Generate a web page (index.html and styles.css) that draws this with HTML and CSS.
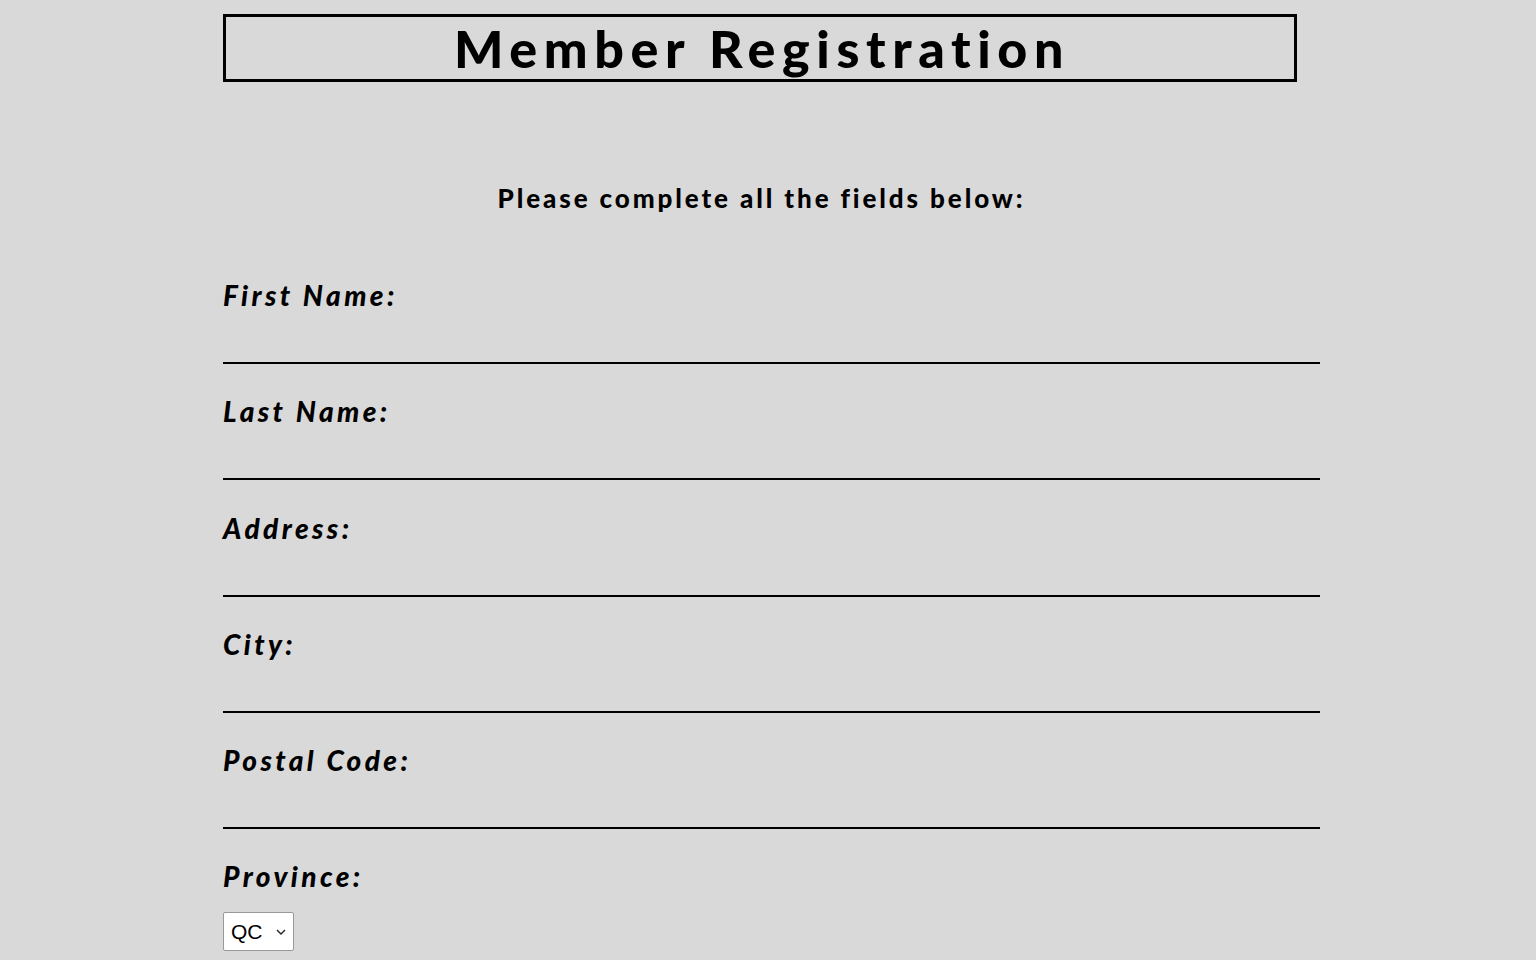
FILE: index.html
```html
<!DOCTYPE html>
<html lang="en">
<head>
<meta charset="utf-8">
<title>Member Registration</title>
<link rel="stylesheet" href="styles.css">
</head>
<body>
<main class="page">
  <h1 class="title">Member Registration</h1>
  <p class="intro">Please complete all the fields below:</p>
  <form class="form">
    <div class="field">
      <label class="label" for="fn">First Name:</label>
      <input class="input" id="fn" type="text">
    </div>
    <div class="field">
      <label class="label" for="ln">Last Name:</label>
      <input class="input" id="ln" type="text">
    </div>
    <div class="field">
      <label class="label" for="ad">Address:</label>
      <input class="input" id="ad" type="text">
    </div>
    <div class="field">
      <label class="label" for="ci">City:</label>
      <input class="input" id="ci" type="text">
    </div>
    <div class="field">
      <label class="label" for="pc">Postal Code:</label>
      <input class="input" id="pc" type="text">
    </div>
    <div class="field">
      <label class="label" for="pr">Province:</label>
      <div class="select-wrap">
        <select class="select" id="pr">
          <option>QC</option>
          <option>ON</option>
        </select>
        <svg class="chev" width="10" height="6" viewBox="0 0 10 6"><path d="M1 1l4 4 4-4" fill="none" stroke="#222" stroke-width="1.4"/></svg>
      </div>
    </div>
  </form>
</main>
</body>
</html>
```
FILE: styles.css
```css
html, body {
  margin: 0;
  padding: 0;
  background: #d9d9d9;
  color: #000;
  font-family: "Lato", "Liberation Sans", sans-serif;
}
.page {
  margin-left: 223px;
  width: 1097px;
  padding-top: 14px;
}
.title {
  box-sizing: border-box;
  width: 1074px;
  height: 68px;
  margin: 0;
  border: 3px solid #000;
  text-align: center;
  font-size: 52px;
  font-weight: 900;
  line-height: 62px;
  letter-spacing: 6.6px;
  text-indent: 4px;
}
.intro {
  width: 1074px;
  margin: 98px 0 0;
  text-align: center;
  font-size: 26px;
  font-weight: 900;
  line-height: 36px;
  letter-spacing: 2.9px;
  text-indent: 3px;
}
.form {
  display: flex;
  flex-direction: column;
  gap: 29.3px;
  margin-top: 61px;
}
.field {
  display: flex;
  flex-direction: column;
}
.label {
  font-size: 28px;
  font-weight: 900;
  font-style: italic;
  line-height: 36px;
  letter-spacing: 3.4px;
}
.input {
  box-sizing: border-box;
  width: 100%;
  height: 51px;
  border: 0;
  border-bottom: 2px solid #000;
  background: transparent;
  outline: none;
  font-size: 20px;
  padding: 0;
}
.select-wrap {
  position: relative;
  width: 71px;
  height: 39px;
  margin-top: 18px;
}
.select {
  box-sizing: border-box;
  width: 71px;
  height: 39px;
  appearance: none;
  -webkit-appearance: none;
  background: #fff;
  border: 1px solid #999;
  border-radius: 2px;
  font-family: "Liberation Sans", Arial, sans-serif;
  font-size: 21px;
  padding: 0 0 0 7px;
  color: #000;
}
.chev {
  position: absolute;
  right: 8px;
  top: 17px;
  pointer-events: none;
}
```
